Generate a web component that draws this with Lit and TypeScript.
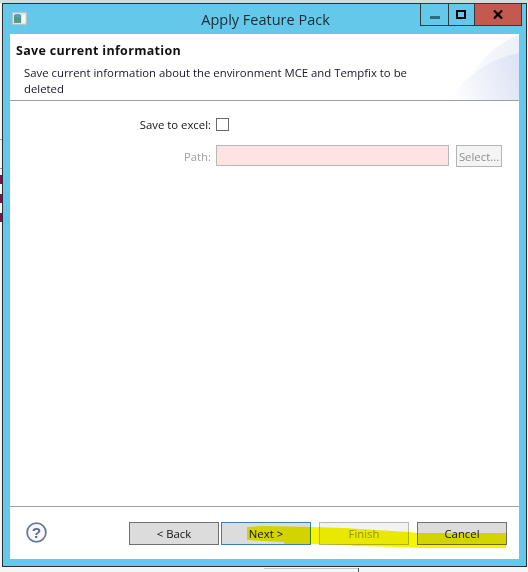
import { LitElement, html, css } from "lit";
import { customElement } from "lit/decorators.js";

@customElement("app-root")
export class AppRoot extends LitElement {
  static styles = css`
    :host { display: block; position: relative; width: 528px; height: 572px; overflow: hidden; background: #f4f5f5; font-family: "Open Sans", "Noto Sans", sans-serif; font-size: 11.35px; color: #111; }
    .desk { padding: 3px 1px 0 2px; height: 569px; box-sizing: border-box; background: linear-gradient(#cfdcdc 0 3px, #f4f5f5 3px); }
    .win { height: 564px; box-sizing: border-box; border: 1px solid #2c3032; background: #64c8ea; display: flex; flex-direction: column; position: relative; }
    .titlebar { height: 30px; flex: none; display: flex; align-items: center; justify-content: center; position: relative; }
    .title { font-size: 14.5px; color: #1b2a33; margin-top: 1px; margin-left: 2px; }
    .appicon { position: absolute; left: 9px; top: 8px; width: 15px; height: 13px; }
    .controls { position: absolute; right: 4px; top: -1px; display: flex; height: 21px; border: 1px solid #34383a; }
    .ctl { display: flex; align-items: center; justify-content: center; height: 100%; }
    .ctl + .ctl { border-left: 1px solid #34383a; }
    .min { width: 27px; } .max { width: 25px; } .close { width: 46px; background: #c45a4f; }
    .page { flex: 1; margin: 0 7px 7px; background: #fff; display: flex; flex-direction: column; min-height: 0; }
    .head { height: 67px; flex: none; box-sizing: border-box; border-bottom: 1px solid #a0a0a0; position: relative; padding: 9px 6px 0; }
    .banner { position: absolute; right: 0; top: 0; width: 70px; height: 66px; }
    .h1 { font-weight: 700; font-size: 12.5px; letter-spacing: .3px; line-height: 16px; position: relative; }
    .desc { margin: 6px 0 0 8px; width: 410px; line-height: 16px; position: relative; color: #161626; }
    .form { flex: 1; display: grid; grid-template-columns: 201px 233px 48px; column-gap: 5px; grid-auto-rows: min-content; align-items: center; padding-top: 16px; row-gap: 13px; line-height: 15px; }
    .lab { text-align: right; }
    .lab.dis { color: #9f9f9f; }
    .check { width: 13px; height: 13px; box-sizing: border-box; border: 1px solid #6a6a6a; background: #fff; }
    .path { height: 21px; align-self: start; background: #fde3e3; border: 1px solid #b8b8b8; box-sizing: border-box; width: 233px; }
    .sel { height: 22px; width: 46px; box-sizing: border-box; border: 1px solid #b4b4b4; background: #f4f4f4; color: #8f8f8f; display: flex; align-items: center; justify-content: center; margin-left: 2px; }
    .foot { height: 53px; flex: none; border-top: 1px solid #a0a0a0; display: flex; align-items: flex-start; padding: 15px 12px 0 16px; box-sizing: border-box; }
    .help { width: 21px; height: 21px; }
    .btns { margin-left: auto; display: flex; }
    .btn { width: 90px; height: 23px; box-sizing: border-box; border: 1px solid #707070; background: #dcdcdc; display: flex; align-items: center; justify-content: center; }
    .btn.next { border-color: #3c7fb1; margin-left: 2px; margin-right: 8px; }
    .btn.fin { border-color: #b8b8b8; background: #f2f2f2; color: #9a9a9a; margin-right: 8px; }
    .marks { position: absolute; left: 0; top: 0; width: 528px; height: 572px; pointer-events: none; }
    .hl { position: absolute; left: 0; top: 0; width: 528px; height: 572px; mix-blend-mode: multiply; pointer-events: none; }
  `;
  render() {
    return html`
      <div class="desk">
        <div class="win">
          <div class="titlebar">
            <svg class="appicon" viewBox="0 0 15 13"><rect x=".5" y=".5" width="14" height="12" fill="#dfe6e6" stroke="#b8c4c4"/><rect x="2" y="3" width="7" height="8" fill="#4f9c8c"/><rect x="3" y="2" width="5" height="3" fill="#5aa0c8"/><rect x="10" y="3" width="3" height="8" fill="#f8f8f8"/></svg>
            <span class="title">Apply Feature Pack</span>
            <div class="controls">
              <div class="ctl min"><svg width="10" height="10" viewBox="0 0 10 10"><rect y="6" width="10" height="3" fill="#2f6b82"/></svg></div>
              <div class="ctl max"><svg width="11" height="10" viewBox="0 0 11 10"><rect x="1" y="1" width="8" height="7" fill="none" stroke="#000" stroke-width="2"/></svg></div>
              <div class="ctl close"><svg width="10" height="9" viewBox="0 0 10 9"><path d="M1 0.5 9 8.5M9 0.5 1 8.5" stroke="#000" stroke-width="2.2" fill="none"/></svg></div>
            </div>
          </div>
          <div class="page">
            <div class="head">
              <svg class="banner" viewBox="0 0 70 66"><defs><linearGradient id="g" x1="0" y1="0.7" x2="1" y2="0.5"><stop offset="0" stop-color="#fff"/><stop offset="1" stop-color="#dfe4f5"/></linearGradient></defs><path d="M8 66C22 36 44 10 70 1V66Z" fill="url(#g)" opacity=".55"/><path d="M0 66C16 42 42 24 70 19V66Z" fill="url(#g)"/></svg>
              <div class="h1">Save current information</div>
              <div class="desc">Save current information about the environment MCE and Tempfix to be deleted</div>
            </div>
            <div class="form">
              <div class="lab">Save to excel:</div><div class="check"></div><div></div>
              <div class="lab dis">Path:</div><div class="path"></div><div class="sel">Select...</div>
            </div>
            <div class="foot">
              <svg class="help" viewBox="0 0 21 21"><circle cx="10.5" cy="10.5" r="9.4" fill="#f7f8fb" stroke="#6d7a96" stroke-width="1.8"/><text x="10.5" y="16" text-anchor="middle" font-family="Liberation Sans, sans-serif" font-size="15.5" font-weight="700" fill="#5d6a88">?</text></svg>
              <div class="btns">
                <div class="btn">&lt; Back</div>
                <div class="btn next">Next &gt;</div>
                <div class="btn fin">Finish</div>
                <div class="btn">Cancel</div>
              </div>
            </div>
          </div>
        </div>
      </div>
      <svg class="marks" viewBox="0 0 528 572">
        <g fill="#7a1450"><rect x="0" y="175" width="2" height="9"/><rect x="0" y="194" width="2" height="9"/><rect x="0" y="213" width="2" height="9"/></g>
        <rect x="0" y="139" width="2" height="1" fill="#999"/><rect x="0" y="168" width="2" height="1" fill="#999"/>
        <rect x="358" y="568" width="1" height="4" fill="#555"/>
        <rect x="264" y="568" width="94" height="1" fill="#c8c8c8"/>
      </svg>
      <svg class="hl" viewBox="0 0 528 572">
        <path d="M247 527L264 526L311 527L345 528L375 530L409 532L417 533H506V548L420 548L395 547L356 546L345 545L311 544H285L283 542L247 540Z" fill="#f5f500"/>
      </svg>
    `;
  }
}
